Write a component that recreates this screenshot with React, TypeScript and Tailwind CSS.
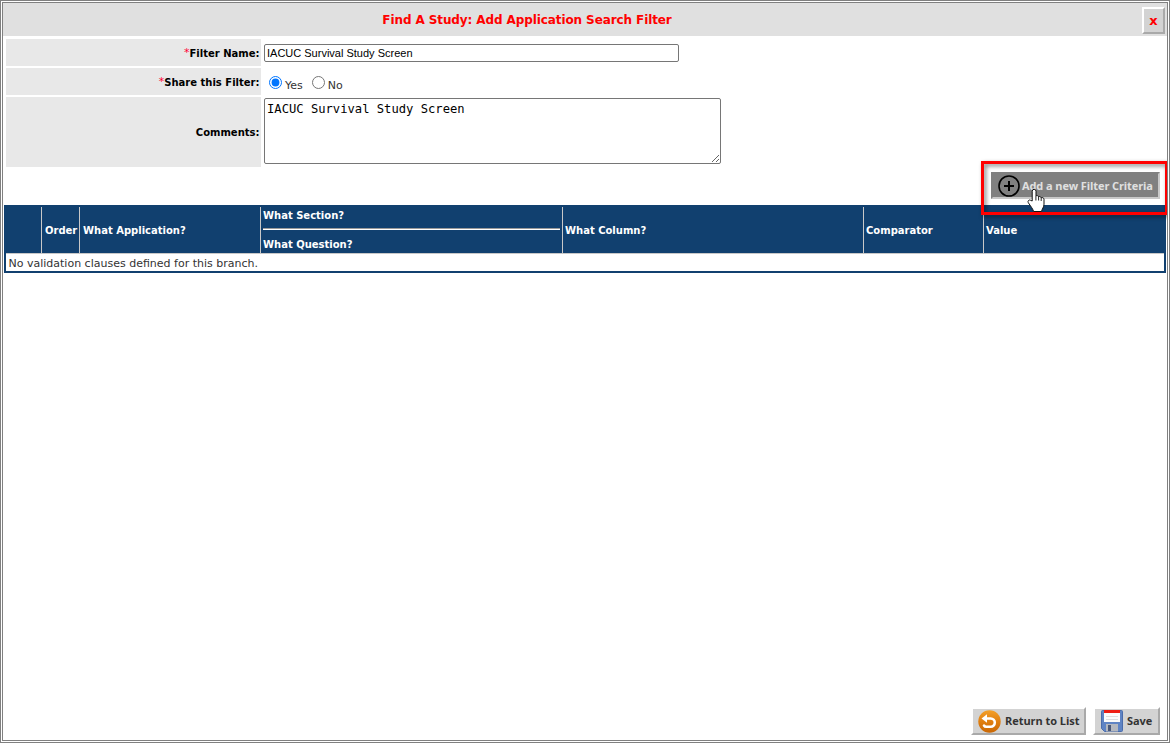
import { useState } from "react";
import clsx from "clsx";

interface FieldRowProps {
  label: string;
  required?: boolean;
  className: string;
  children: React.ReactNode;
}

function FieldRow({ label, required, className, children }: FieldRowProps) {
  return (
    <div className={clsx("flex gap-[3px]", className)}>
      <div className="flex w-[255px] items-center justify-end bg-[#e8e8e8] pr-[1.5px] pt-px text-[10px] font-bold text-black">
        {required && (
          <span className="text-[11px] font-normal text-[#ff0033]">*</span>
        )}
        {label}
      </div>
      {children}
    </div>
  );
}

interface RadioProps {
  label: string;
  checked: boolean;
  onChange: () => void;
}

function Radio({ label, checked, onChange }: RadioProps) {
  return (
    <label className="flex items-start">
      <input
        type="radio"
        name="share"
        checked={checked}
        onChange={onChange}
        className="m-0 mt-2 h-[13px] w-[13px] accent-[#0075ff]"
      />
      <span className="ml-[3px] mt-[9px] text-[11px] leading-[17px] text-[#333]">
        {label}
      </span>
    </label>
  );
}

function PlusIcon() {
  return (
    <svg width="22" height="22" viewBox="0 0 22 22" fill="none" stroke="#000">
      <circle cx="11" cy="11" r="10" strokeWidth="1.6" />
      <path d="M11 6v10M6 11h10" strokeWidth="2" />
    </svg>
  );
}

function ReturnIcon() {
  return (
    <svg
      className="shrink-0"
      width="24"
      height="24"
      viewBox="0 0 24 24"
      fill="none"
    >
      <defs>
        <linearGradient id="orange" x1="0" y1="0" x2="0" y2="1">
          <stop offset="0" stopColor="#f3a02a" />
          <stop offset="0.5" stopColor="#e07f10" />
          <stop offset="1" stopColor="#c96806" />
        </linearGradient>
      </defs>
      <circle cx="12.500" cy="12.500" r="11.200" fill="url(#orange)" />
      <path
        d="M9 9.500h4.700a4.100 4.100 0 0 1 0 8.200H9.200q-1.500 0-2.200-1.200"
        stroke="#fff"
        strokeWidth="2.600"
        strokeLinecap="round"
      />
      <path d="M4.500 9.500l5.500-4.300v8.600z" fill="#fff" />
    </svg>
  );
}

function SaveIcon() {
  return (
    <svg className="shrink-0" width="22" height="22" viewBox="0 0 22 22">
      <path
        d="M1.500.5h19a1 1 0 0 1 1 1v19a1 1 0 0 1-1 1h-17l-3-3v-17a1 1 0 0 1 1-1z"
        fill="#5f84c4"
        stroke="#4a6cab"
      />
      <rect x="3" y="1" width="16" height="11" fill="#fbfbfb" />
      <rect x="3" y="0" width="16" height="3" fill="#ee1c12" />
      <path d="M5 6.500h12M5 9.500h12" stroke="#ddd" />
      <rect x="5" y="14" width="12" height="7.500" fill="#b4b8bf" />
      <rect x="7" y="15" width="3" height="6" fill="#4a5878" />
    </svg>
  );
}

function Cursor() {
  return (
    <svg
      className="absolute left-[1024px] top-[185px]"
      width="18"
      height="25"
      viewBox="0 0 18 25"
    >
      <path
        d="M5.200 13V3.200a1.900 1.900 0 0 1 3.800 0V8c.6-.8 2.400-.5 2.600.8.800-.7 2.400-.2 2.500 1 1-.6 2.900 0 2.900 1.400v5c0 3-2 4.700-2.500 7.300H6.600C6 21 3.500 18 1.300 14.700c-1-1.700.8-3.400 2.300-2.400z"
        fill="#fff"
        stroke="#111"
      />
      <path
        d="M8.900 8v4.500M11.600 9v3.500M14.200 10v3"
        stroke="#111"
        strokeWidth="0.9"
      />
    </svg>
  );
}

const headCell =
  "flex items-center border-r border-[#c8c8c8] pl-0.5 pt-px text-[10px] font-bold text-white whitespace-nowrap";

const button =
  "flex h-7 items-center border-2 border-t-white border-l-white border-r-[#a9a9a9] border-b-[#a9a9a9] bg-[#d3d3d3] font-['Open_Sans',sans-serif] text-[11px] font-bold tracking-[-0.05px] text-[#333] whitespace-nowrap";

function App() {
  const [name, setName] = useState("IACUC Survival Study Screen");
  const [comments, setComments] = useState("IACUC Survival Study Screen");
  const [shared, setShared] = useState(true);

  return (
    <div className="relative flex h-[743px] w-[1170px] flex-col overflow-hidden border-[3px] border-double border-[#808080] bg-white font-['DejaVu_Sans',sans-serif]">
      <header className="flex h-[33px] shrink-0 items-center bg-[#e0e0e0] pr-0.5">
        <h1 className="grow pr-[91px] text-center text-[12px] font-bold tracking-[-0.1px] text-[#f00]">
          Find A Study: Add Application Search Filter
        </h1>
        <button
          type="button"
          className="mt-0.5 h-[27px] w-[23px] border-2 border-t-white border-l-white border-r-[#a9a9a9] border-b-[#a9a9a9] bg-[#d3d3d3] text-[13px] font-bold leading-none text-[#f00]"
        >
          x
        </button>
      </header>

      <form className="flex flex-col gap-0.5 pl-[3px] pt-[3px]">
        <FieldRow label="Filter Name:" required className="h-[27px]">
          <input
            type="text"
            value={name}
            onChange={(e) => setName(e.target.value)}
            className="mt-[5px] h-[18px] w-[415px] rounded-xs border border-[#767676] px-0.5 font-['Liberation_Sans',sans-serif] text-[11px] text-black"
          />
        </FieldRow>
        <FieldRow label="Share this Filter:" required className="h-[27px]">
          <div className="flex gap-[9px] pl-[5px]">
            <Radio
              label="Yes"
              checked={shared}
              onChange={() => setShared(true)}
            />
            <Radio
              label="No"
              checked={!shared}
              onChange={() => setShared(false)}
            />
          </div>
        </FieldRow>
        <FieldRow label="Comments:" className="h-[70px]">
          <textarea
            value={comments}
            onChange={(e) => setComments(e.target.value)}
            className="mt-px h-[66px] w-[457px] rounded-xs border border-[#767676] p-0.5 font-['DejaVu_Sans_Mono',monospace] text-[12.17px] leading-4 text-black"
          />
        </FieldRow>
      </form>

      <div className="flex h-[38px] shrink-0 justify-end pr-[7px] pt-[5px]">
        <button
          type="button"
          className="flex h-[27px] w-[169px] items-center border-2 border-t-[#808080] border-l-[#808080] border-r-[#c8c8c8] border-b-[#c8c8c8] bg-[#808080] pl-[5px] pt-px font-['Open_Sans',sans-serif] text-[11px] font-bold tracking-[-0.1px] text-[#e0e0e0] whitespace-nowrap"
        >
          <PlusIcon />
          <span className="ml-0.5">Add a new Filter Criteria</span>
        </button>
      </div>

      <section className="ml-px mr-px h-[68px] shrink-0 border-2 border-[#11406f]">
        <div className="flex h-[47px] border-b border-[#c8c8c8] bg-[#11406f]">
          <div className={clsx(headCell, "w-9")} />
          <div className={clsx(headCell, "w-[38px]")}>
            <span className="ml-px">Order</span>
          </div>
          <div className={clsx(headCell, "w-[181px]")}>
            <span className="ml-px">What Application?</span>
          </div>
          <div className="flex w-[302px] flex-col border-r border-[#c8c8c8] px-0.5 text-[10px] font-bold text-white">
            <div className="h-[22px] pt-px leading-4">What Section?</div>
            <div className="mt-px h-0.5 border-t border-[#9a9a9a] bg-white" />
            <div className="pt-[7px] leading-4">What Question?</div>
          </div>
          <div className={clsx(headCell, "w-[301px]")}>What Column?</div>
          <div className={clsx(headCell, "w-[120px]")}>Comparator</div>
          <div className="flex items-center pl-0.5 pt-px text-[10px] font-bold text-white">
            Value
          </div>
        </div>
        <p className="pl-[2.5px] text-[11px] leading-[19px] text-[#333]">
          No validation clauses defined for this branch.
        </p>
      </section>

      <footer className="mt-auto flex justify-end gap-[7px] pb-[5px] pr-[7px]">
        <button type="button" className={clsx(button, "w-[115px] pl-1")}>
          <ReturnIcon />
          <span className="ml-1">Return to List</span>
        </button>
        <button type="button" className={clsx(button, "w-[67px] pl-1.5")}>
          <SaveIcon />
          <span className="ml-1">Save</span>
        </button>
      </footer>

      <div className="pointer-events-none absolute left-[978px] top-[158px] h-[54px] w-[187px] border-[3px] border-[#f00] drop-shadow-[2px_2px_2px_rgba(0,0,0,0.55)]" />
      <Cursor />
    </div>
  );
}

export default App;
